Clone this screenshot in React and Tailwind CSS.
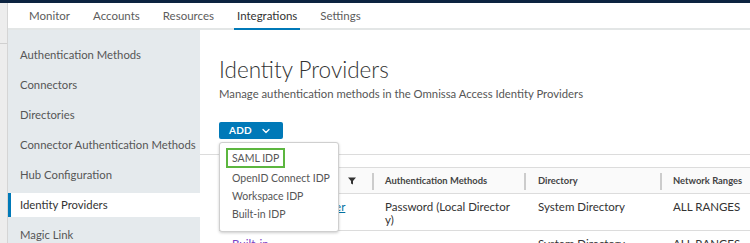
import React from "react";
import { ChevronDown } from "lucide-react";

const tabs = ["Monitor", "Accounts", "Resources", "Integrations", "Settings"];

const sideItems = [
  "Authentication Methods",
  "Connectors",
  "Directories",
  "Connector Authentication Methods",
  "Hub Configuration",
  "Identity Providers",
  "Magic Link",
];

const menuItems = ["SAML IDP", "OpenID Connect IDP", "Workspace IDP", "Built-in IDP"];

function FilterIcon() {
  return (
    <svg width="8" height="8" viewBox="0 0 8 8" className="text-[#333]">
      <path d="M0 0.5h8L5 4v3.5L3 6.5V4z" fill="currentColor" />
    </svg>
  );
}

export default function App() {
  return (
    <div className="h-[243px] w-full overflow-hidden bg-white font-['Lato',sans-serif] text-[#565656]">
      {/* top brand strip */}
      <div className="h-[3px] bg-[#0c2340]" />

      <div className="flex h-[240px]">
        {/* left edge */}
        <div className="w-2 shrink-0 border-r border-[#d5d5d5] bg-[#ededed]">
          <div className="mt-[40px] h-px bg-[#d0d0d0]" />
        </div>

        <div className="flex min-w-0 flex-1 flex-col">
          {/* tab bar */}
          <nav className="flex h-[27px] shrink-0 items-stretch gap-[17px] border-b-2 border-[#e3e6e6] pl-[18px] text-[11.5px]">
            {tabs.map((t) => (
              <div
                key={t}
                className={
                  "-mb-[2px] flex items-center border-b-2 px-[3px] " +
                  (t === "Integrations"
                    ? "border-[#0079b8] text-[#333]"
                    : "border-transparent text-[#5c5c5c]")
                }
              >
                {t}
              </div>
            ))}
          </nav>

          <div className="flex min-h-0 flex-1">
            {/* sidebar */}
            <aside className="flex w-[192px] shrink-0 flex-col gap-[6px] bg-[#e5eaed] pt-[13px] text-[11.3px]">
              {sideItems.map((s) => (
                <div
                  key={s}
                  className={
                    "flex h-[24px] shrink-0 items-center whitespace-nowrap " +
                    (s === "Identity Providers"
                      ? "border-l-[3px] border-[#0079b8] bg-white pl-[9px] text-[#333]"
                      : "pl-[12px] text-[#565656]")
                  }
                >
                  {s}
                </div>
              ))}
            </aside>

            {/* main */}
            <main className="relative min-w-0 flex-1">
              <div className="pl-[19px] pt-[28px]">
                <h1 className="text-[22.5px] font-light leading-[24px] text-[#333]">
                  Identity Providers
                </h1>
                <p className="mt-[5px] text-[11.3px] leading-[14px] text-[#565656]">
                  Manage authentication methods in the Omnissa Access Identity Providers
                </p>
                <button className="mt-[21px] flex h-[17px] w-[64px] items-center gap-[8px] rounded-[2px] bg-[#0079b8] pl-[10px] text-[10px] font-bold tracking-wide text-white">
                  ADD
                  <ChevronDown size={12} strokeWidth={2.5} />
                </button>
              </div>

              <div className="mt-[15px] h-px bg-[#dcdcdc]" />

              {/* table */}
              <div className="ml-[19px] mt-[12px] w-[600px] border-t border-[#dcdcdc] text-[11.5px] text-[#333]">
                <div className="flex h-[25px] items-center bg-[#fafafa] pt-[1px] text-[9.4px] font-bold text-[#444]">
                  <div className="flex w-[153px] shrink-0 items-center justify-end pr-[16px]">
                    <FilterIcon />
                  </div>
                  <div className="flex h-[17px] w-[152px] shrink-0 items-center border-l-2 border-[#ccc] pl-[11px]">
                    Authentication Methods
                  </div>
                  <div className="flex h-[17px] w-[136px] shrink-0 items-center border-l-2 border-[#ccc] pl-[12px]">
                    Directory
                  </div>
                  <div className="flex h-[17px] shrink-0 items-center border-l-2 border-[#ccc] pl-[11px]">
                    Network Ranges
                  </div>
                </div>
                <div className="flex h-[37px] border-t border-[#dcdcdc] pt-[6px] leading-[13px]">
                  <div className="w-[153px] shrink-0 whitespace-nowrap pl-[16px]">
                    <a className="text-[#0072a3] underline">Omnissa IDP Provider</a>
                  </div>
                  <div className="w-[152px] shrink-0 pl-[13px]">
                    Password (Local Director
                    <br />
                    y)
                  </div>
                  <div className="w-[136px] shrink-0 pl-[14px]">System Directory</div>
                  <div className="shrink-0 pl-[13px]">ALL RANGES</div>
                </div>
                <div className="flex border-t border-[#dcdcdc] pt-[6px] leading-[13px]">
                  <div className="w-[153px] shrink-0 pl-[13px]">
                    <a className="text-[#7a3fc5] underline">Built-in</a>
                  </div>
                  <div className="w-[152px] shrink-0 pl-[13px]" />
                  <div className="w-[136px] shrink-0 pl-[14px]">System Directory</div>
                  <div className="shrink-0 pl-[13px]">ALL RANGES</div>
                </div>
              </div>

              {/* dropdown menu */}
              <div className="absolute left-[19px] top-[112px] h-[90px] w-[120px] rounded-[3px] border border-[#cfcfcf] bg-white pt-[5px] text-[10.5px] text-[#565656] shadow-[0_1px_3px_rgba(0,0,0,0.2)]">
                {menuItems.map((m, i) => (
                  <div
                    key={m}
                    className={
                      "ml-[6px] flex w-fit items-center whitespace-nowrap px-[4px] " +
                      (i === 0
                        ? "mb-[2px] h-[20px] border-2 border-[#5cb63f] pt-[2px]"
                        : "h-[18px] border-2 border-transparent")
                    }
                  >
                    {m}
                  </div>
                ))}
              </div>
            </main>
          </div>
        </div>
      </div>
    </div>
  );
}
